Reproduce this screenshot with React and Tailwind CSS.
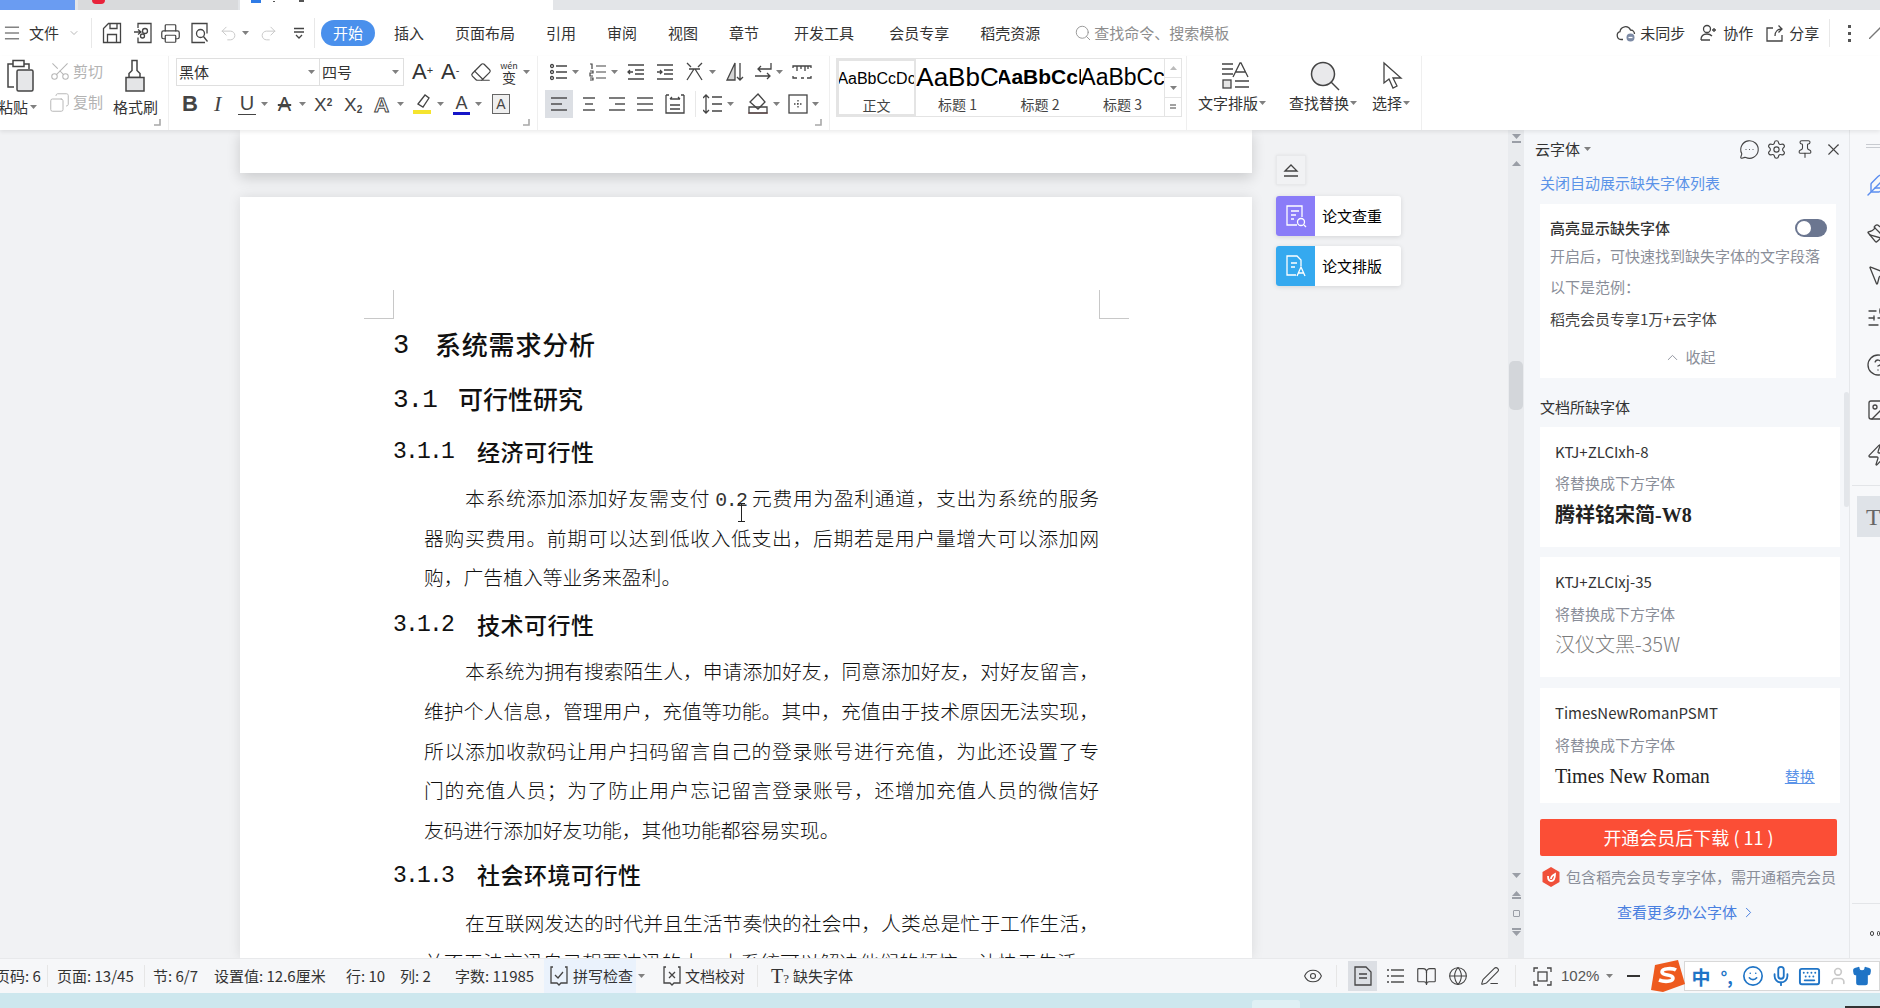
import React from 'react';
import { Menu, ChevronDown, ChevronUp, ChevronRight, Printer, Undo2, Redo2, Search, Scissors, MessageCircleMore, Settings, Pin, X, Eye, Globe, PenLine, Mic, Shirt, Smile, Keyboard, Copy, BookOpen, Eraser, Paintbrush, MousePointer2, SlidersHorizontal, CircleHelp, Zap, Image, Feather, User } from 'lucide-react';

const C = '\uFF0C';
const SEMI = '\uFF1B';
const COLON = '\uFF1A';
const STOP = '\u3002';
const J = '\u2060';

const P1A = `本系统添加添加好友需支付`;
const P1B = `元费用为盈利通道${C}支出为系统的服务器购买费用${STOP}前期可以达到低收入低支出${C}后期若是用户量增大可以添加网购${C}广告植入等业务来盈利${STOP}`;
const P2 = `本系统为拥有搜索陌生人${C}申请添加好友${C}同意添加好友${C}对好友留言${C}维护个人信息${C}管理用户${C}充值等功能${STOP}其中${C}充值由于技术原因无法实现${C}所以添加收款码让用户扫码留言自己的登录账号进行充值${C}为此还设置了专门${J}的充值人员${SEMI}为了防止用户忘记留言登录账号${C}还增加充值人员的微信好友${J}码进行添加好友功能${C}其他功能都容易实现${STOP}`;
const P3 = `在互联网发达的时代并且生活节奏快的社会中${C}人类总是忙于工作生活${C}并不无法交迅自己想要达迅的人${STOP}本系统可以解决他们的烦恼${C}让快于生活`;

const Caret = ({ cls = 'ml-[4px]' }) => (
  <svg width="7" height="4" viewBox="0 0 7 4" className={`shrink-0 ${cls}`}><path d="M0 0h7L3.5 4z" fill="#808080" /></svg>
);
const Lines = ({ rows, w = 18, h = 18, cls = '', sw = 1.4 }) => (
  <svg width={w} height={h} viewBox={`0 0 ${w} ${h}`} fill="none" stroke="#444" strokeWidth={sw} className={`shrink-0 ${cls}`}>
    {rows.map((r, i) => <path key={i} d={`M${r[0]} ${r[2]}H${r[1]}`} />)}
  </svg>
);
const Svg = ({ w, h, cls = '', sw = 1.3, color = '#444', children }) => (
  <svg width={w} height={h} viewBox={`0 0 ${w} ${h}`} fill="none" stroke={color} strokeWidth={sw} className={`shrink-0 ${cls}`}>{children}</svg>
);
const Launcher = ({ cls }) => (
  <svg width="7" height="7" viewBox="0 0 7 7" className={`absolute bottom-[4px] ${cls}`}><path d="M6 0v6H0" fill="none" stroke="#a8a8a8" strokeWidth="1.6" /></svg>
);

function TabStrip() {
  return (
    <div className="h-[10px] flex bg-[#e3e5e8] overflow-hidden">
      <div className="w-[75px] bg-[#6a9cf2]" />
      <div className="w-[160px] ml-[3px] bg-[#d9dadc] pl-[14px]"><div className="w-[13px] h-[4px] bg-[#e8223a] rounded-b-sm" /></div>
      <div className="w-[313px] ml-[2px] bg-white pl-[11px] flex gap-[12px]">
        <div className="w-[10px] h-[3px] bg-[#2f7be6]" />
        <div className="w-[2px] h-[1px] mt-[1px] bg-[#555]" />
        <div className="w-[5px] h-[2px] ml-[12px] bg-[#555]" />
      </div>
    </div>
  );
}

function MenuRow() {
  const tab = 'shrink-0 text-[15px] text-[#333]';
  return (
    <div className="h-[46px] bg-white flex items-center overflow-hidden">
      <Menu size={20} strokeWidth={1.2} color="#444" className="ml-[2px] shrink-0" />
      <span className={`${tab} ml-[7px]`}>文件</span>
      <ChevronDown size={12} strokeWidth={1.4} color="#999" className="ml-[9px] shrink-0" />
      <div className="w-px h-[30px] bg-[#e8e8e8] ml-[11px] shrink-0" />
      <Svg w={20} h={22} cls="ml-[10px]"><path d="M1.5 20.5v-14l5-5h12v19zM5.5 20.5v-8h9v8M8 1.5v5h7v-5" /></Svg>
      <Svg w={20} h={22} cls="ml-[11px]"><path d="M5 6V1.5h13v19H5v-5M1 10h6M5 7.5 8 10l-3 2.500" /><circle cx="12" cy="9" r="2.500" /><circle cx="9.500" cy="14" r="2" /></Svg>
      <Printer size={21} strokeWidth={1.4} color="#444" className="ml-[7px] shrink-0" />
      <Svg w={20} h={22} cls="ml-[9px]"><path d="M15 20.500H2v-19h15v10" /><circle cx="10.500" cy="11.500" r="4" /><path d="m13.500 14.500 4 5" /></Svg>
      <Undo2 size={19} strokeWidth={1.2} color="#c6c6c6" className="ml-[9px] shrink-0" />
      <Caret cls="ml-[4px]" />
      <Redo2 size={19} strokeWidth={1.2} color="#c6c6c6" className="ml-[10px] shrink-0" />
      <Svg w={12} h={12} cls="ml-[15px]"><path d="M1 1.500h10M1 5h10M3 8l3 3 3-3" /></Svg>
      <div className="w-px h-[30px] bg-[#e8e8e8] ml-[9px] shrink-0" />
      <div className="ml-[6px] w-[54px] h-[26px] rounded-full bg-[#4a90ec] text-white text-[15px] flex items-center justify-center shrink-0">开始</div>
      <span className={`${tab} ml-[19px]`}>插入</span>
      <span className={`${tab} ml-[31px]`}>页面布局</span>
      <span className={`${tab} ml-[31px]`}>引用</span>
      <span className={`${tab} ml-[31px]`}>审阅</span>
      <span className={`${tab} ml-[31px]`}>视图</span>
      <span className={`${tab} ml-[31px]`}>章节</span>
      <span className={`${tab} ml-[35px]`}>开发工具</span>
      <span className={`${tab} ml-[35px]`}>会员专享</span>
      <span className={`${tab} ml-[31px]`}>稻壳资源</span>
      <Search size={18} strokeWidth={1.3} color="#999" className="ml-[34px] shrink-0" />
      <span className="ml-[2px] text-[15px] text-[#8d8d8d] shrink-0">查找命令、搜索模板</span>
      <div className="ml-[387px] flex items-center shrink-0">
        <Svg w={20} h={18}><path d="M7 15.500H5a4 4 0 0 1-1-7.800A5.500 5.500 0 0 1 14.500 6a4 4 0 0 1 4 4" /><circle cx="14.500" cy="13.500" r="4" fill="#7c8aa5" stroke="none" /><path d="M12.500 13.500h4" stroke="#fff" /></Svg>
        <span className="ml-[4px] text-[15px]">未同步</span>
        <Svg w={16} h={18} cls="ml-[15px]"><circle cx="7" cy="5" r="3.500" /><path d="M1 16c0-5 3-6 6-6s4 1 5 2M1 16h9M12 6h4M14 4v4" /></Svg>
        <span className="ml-[7px] text-[15px]">协作</span>
        <Svg w={18} h={18} cls="ml-[13px]"><path d="M7 4H1v13h15v-6M9 12c0-5 3-7 7-7M12.500 1.500 16 5l-3.500 3.500" /></Svg>
        <span className="ml-[5px] text-[15px]">分享</span>
        <div className="w-px h-[28px] bg-[#e8e8e8] ml-[10px]" />
        <div className="ml-[18px] w-[3px] flex flex-col gap-[4px]"><i className="w-[3px] h-[3px] bg-[#555]" /><i className="w-[3px] h-[3px] bg-[#555]" /><i className="w-[3px] h-[3px] bg-[#555]" /></div>
        <Svg w={12} h={12} cls="ml-[18px]" color="#777"><path d="M0 12 12 0" /></Svg>
      </div>
    </div>
  );
}

function Clipboard() {
  return (
    <div className="w-[169px] shrink-0 border-r border-[#efefef] relative flex">
      <div className="w-[44px] shrink-0 flex flex-col">
        <Svg w={28} h={34} cls="ml-[6px] mt-[3px]" sw={1.5}><path d="M8 28H2V5h5M18 5h5v5" /><rect x="7" y="1.500" width="11" height="6" fill="#fff" /><rect x="11" y="11" width="16" height="21" rx="1.500" fill="#e6e7e9" /></Svg>
        <div className="flex items-center mt-[4px] -ml-[2px] text-[15px] leading-[20px]">粘贴<Caret cls="ml-[2px]" /></div>
      </div>
      <div className="w-[62px] shrink-0 ml-[5px] flex flex-col text-[#b3b3b3]">
        <div className="flex items-center h-[24px] mt-[3px]"><Scissors size={22} strokeWidth={1.1} color="#b5b5b5" className="-scale-x-100 rotate-90" /><span className="ml-[2px] text-[15px]">剪切</span></div>
        <div className="flex items-center h-[24px] mt-[7px]"><Copy size={21} strokeWidth={1.1} color="#b5b5b5" className="-scale-x-100" /><span className="ml-[3px] text-[15px]">复制</span></div>
      </div>
      <div className="w-[48px] shrink-0 ml-[2px] flex flex-col">
        <Svg w={26} h={34} cls="ml-[9px] mt-[3px]" sw={1.5}><path d="M10 1.500h5v10l3 3v4H7v-4l3-3z" /><path d="M4 18.500h18V32H4z" fill="#e4e5e7" stroke="#444" /></Svg>
        <div className="mt-[4px] text-[15px] leading-[20px] whitespace-nowrap">格式刷</div>
      </div>
      <Launcher cls="right-[7px]" />
    </div>
  );
}

function FontGroup() {
  return (
    <div className="w-[369px] shrink-0 border-r border-[#efefef] relative flex flex-col">
      <div className="h-[30px] mt-[1px] flex items-center">
        <div className="ml-[7px] w-[228px] h-[28px] border border-[#dfdfdf] flex text-[15px] shrink-0">
          <div className="w-[143px] flex items-center pl-[2px] pr-[4px] border-r border-[#dfdfdf]"><span className="flex-1">黑体</span><Caret /></div>
          <div className="flex-1 flex items-center pl-[2px] pr-[4px]"><span className="flex-1">四号</span><Caret /></div>
        </div>
        <span className="ml-[8px] w-[20px] text-[22px] leading-none font-['Liberation_Sans'] font-light">A<sup className="text-[11px]">+</sup></span>
        <span className="ml-[9px] w-[19px] text-[22px] leading-none font-['Liberation_Sans']">A<sup className="text-[11px]">-</sup></span>
        <Eraser size={22} strokeWidth={1.3} color="#444" className="ml-[10px] shrink-0" />
        <div className="ml-[8px] w-[18px] flex flex-col items-center leading-none"><span className="text-[9px] leading-[9px]">wén</span><span className="text-[14px] leading-[14px]">变</span></div>
        <Caret cls="ml-[5px]" />
      </div>
      <div className="h-[30px] mt-[2px] flex items-center font-['Liberation_Sans'] text-[#444] leading-none">
        <span className="ml-[13px] w-[16px] text-[22px] font-bold">B</span>
        <span className="ml-[16px] w-[10px] text-[22px] italic font-['Liberation_Serif']">I</span>
        <span className="ml-[14px] w-[18px] text-[20px] border-b-[1.5px] border-[#444] pb-[1px] text-center">U</span>
        <Caret cls="ml-[5px]" />
        <span className="ml-[7px] w-[19px] text-[20px] text-center line-through font-light">A</span>
        <Caret cls="ml-[5px]" />
        <span className="ml-[8px] w-[21px] text-[19px]">X<sup className="text-[10px] font-bold">2</sup></span>
        <span className="ml-[9px] w-[21px] text-[19px]">X<sub className="text-[10px] font-bold">2</sub></span>
        <span className="ml-[9px] w-[18px] text-[21px] font-bold text-white [-webkit-text-stroke:1px_#444]">A</span>
        <Caret cls="ml-[5px]" />
        <Svg w={20} h={22} cls="ml-[8px]"><path d="m6 11 7-9 4 3-6 9z" /><rect x="1" y="17" width="18" height="4" fill="#f5e42e" stroke="none" /></Svg>
        <Caret cls="ml-[5px]" />
        <div className="ml-[9px] w-[17px] flex flex-col items-center"><span className="text-[18px] leading-[18px]">A</span><i className="w-[17px] h-[3px] bg-[#1515c8]" /></div>
        <Caret cls="ml-[5px]" />
        <span className="ml-[10px] w-[18px] h-[20px] border border-[#666] bg-[#efefef] text-[14px] flex items-center justify-center">A</span>
      </div>
      <Launcher cls="right-[7px]" />
    </div>
  );
}

function ParaGroup() {
  const l = [[3, 15, 3], [5, 13, 9], [3, 15, 15]];
  return (
    <div className="w-[292px] shrink-0 border-r border-[#efefef] relative flex flex-col">
      <div className="h-[30px] mt-[1px] flex items-center">
        <Svg w={18} h={18} cls="ml-[12px]"><circle cx="2" cy="3" r="1.500" /><circle cx="2" cy="9" r="1.500" /><circle cx="2" cy="15" r="1.500" /><path d="M6 3h11M6 9h11M6 15h11" /></Svg>
        <Caret />
        <Svg w={18} h={18} cls="ml-[10px]" sw={1.2}><path d="M1 1h2v5M1 8h3v2H1v3h3M1 15h3v2H1M7 3h10M7 9h10M7 15h10" /></Svg>
        <Caret />
        <Svg w={18} h={18} cls="ml-[9px]"><path d="M1 2h16M8 7h9M8 11h9M1 16h16M6 9H1M3 7 1 9l2 2" /></Svg>
        <Svg w={18} h={18} cls="ml-[11px]"><path d="M1 2h16M8 7h9M8 11h9M1 16h16M1 9h5M4 7l2 2-2 2" /></Svg>
        <Svg w={21} h={20} cls="ml-[10px]"><path d="M3 1l4 4M18 1l-4 4M5 7h11M10 7 3 18M11 7l7 11" /></Svg>
        <Caret />
        <Svg w={20} h={20} cls="ml-[8px]"><path d="M11 1 3 18h8z" fill="#d5d5d5" /><path d="M16 1v17M13 15l3 3 3-3" /></Svg>
        <Svg w={18} h={20} cls="ml-[10px]"><path d="M17 1v6H4M7 4 4 7l3 3M1 14h15M13 11l3 3-3 3" /></Svg>
        <Caret />
        <Svg w={20} h={14} cls="ml-[9px]"><path d="M1 3V1h18v2M1 11v2h4M19 11v2h-4M5 1v5M9 1v3M13 1v5M16 1v3M9 13h3" /></Svg>
      </div>
      <div className="h-[30px] mt-[2px] flex items-center">
        <div className="ml-[7px] w-[28px] h-[28px] bg-[#dcdfe4] flex items-center justify-center"><Lines rows={[[1, 17, 3], [1, 12, 9], [1, 17, 15]]} /></div>
        <Lines cls="ml-[7px]" rows={l} />
        <Lines cls="ml-[10px]" rows={[[1, 17, 3], [7, 17, 9], [1, 17, 15]]} />
        <Lines cls="ml-[10px]" rows={[[1, 17, 3], [1, 17, 9], [1, 17, 15]]} />
        <Svg w={20} h={20} cls="ml-[11px]"><path d="M1 1v18h18V1M1 1h3M19 1h-3M5 5h10M5 5l2-2M15 5l-2-2M5 11h10M5 15h10" /></Svg>
        <div className="w-px h-[26px] bg-[#e8e8e8] ml-[10px]" />
        <Svg w={20} h={22} cls="ml-[7px]"><path d="M3 2v18M0 5l3-3 3 3M0 17l3 3 3-3M9 4h10M9 11h10M9 18h10" /></Svg>
        <Caret />
        <Svg w={22} h={22} cls="ml-[13px]"><path d="m3 9 8-8 7 8-7 7z" /><path d="M1 20h20" stroke="#d88080" /><path d="M2 14h18v6H2z" /></Svg>
        <Caret />
        <Svg w={20} h={20} cls="ml-[8px]"><rect x="1" y="1" width="18" height="18" /><path d="M10 6v8M6 10h8" strokeDasharray="1.500 1.500" /></Svg>
        <Caret />
      </div>
      <Launcher cls="right-[7px]" />
    </div>
  );
}

function Styles() {
  const cells = [
    ['AaBbCcDc', '正文', 'text-[16px]', 'w-[79px] border-2 border-[#e4e4e4] bg-white'],
    ['AaBbC', '标题 1', 'text-[26px]', 'w-[83px]'],
    ['AaBbCcl', '标题 2', 'text-[21px] font-bold', 'w-[82px]'],
    ['AaBbCc', '标题 3', 'text-[23px]', 'w-[83px]'],
  ];
  return (
    <div className="w-[357px] shrink-0 border-r border-[#efefef] flex">
      <div className="ml-[6px] mt-[2px] w-[346px] h-[59px] border border-[#e4e4e4] flex">
        {cells.map((c) => (
          <div key={c[1]} className={`${c[3]} shrink-0 h-full flex flex-col items-center overflow-hidden`}>
            <div className="h-[36px] w-full flex items-center justify-center whitespace-nowrap font-['Liberation_Sans'] text-black overflow-hidden">
              <span className={c[2]}>{c[0]}</span>
            </div>
            <div className="text-[14px] leading-[18px] text-[#444]">{c[1]}</div>
          </div>
        ))}
        <div className="flex-1 border-l border-[#e4e4e4] flex flex-col text-[#999]">
          <div className="h-[19px] flex items-center justify-center border-b border-[#e4e4e4]"><svg width="7" height="4" viewBox="0 0 7 4"><path d="M3.500 0 7 4H0z" fill="#bbb" /></svg></div>
          <div className="h-[20px] flex items-center justify-center border-b border-[#e4e4e4]"><Caret cls="" /></div>
          <div className="flex-1 flex items-center justify-center"><Lines w={8} h={8} sw={1} rows={[[1, 7, 2], [1, 7, 5]]} /></div>
        </div>
      </div>
    </div>
  );
}

function Tools() {
  return (
    <div className="w-[235px] shrink-0 border-r border-[#efefef] flex">
      <div className="w-[70px] ml-[12px] shrink-0 flex flex-col items-center">
        <Svg w={30} h={30} cls="mt-[5px] ml-[4px]"><path d="M1 3h11M1 8h11M1 13h11M12 16 19 2h1l7 14M15 11h10" /><rect x="2" y="19" width="8" height="8" fill="#e5e5e5" /><path d="M14 20h14M14 26h14" /></Svg>
        <div className="flex items-center mt-[2px] -ml-[4px] text-[15px] leading-[20px] whitespace-nowrap">文字排版<Caret cls="ml-[1px]" /></div>
      </div>
      <div className="w-[66px] ml-[21px] shrink-0 flex flex-col items-center">
        <Svg w={30} h={30} cls="mt-[5px] ml-[4px]" sw={1.5}><circle cx="13" cy="13" r="11.500" fill="#e9e9eb" /><path d="m21 21 8 8" /></Svg>
        <div className="flex items-center mt-[2px] text-[15px] leading-[20px] whitespace-nowrap">查找替换<Caret cls="ml-[1px]" /></div>
      </div>
      <div className="w-[40px] ml-[15px] shrink-0 flex flex-col items-center">
        <Svg w={22} h={30} cls="mt-[5px] ml-[4px]"><path d="M2 2v20l5-4 4 9 4-2-4-8h8z" /></Svg>
        <div className="flex items-center mt-[2px] text-[15px] leading-[20px] whitespace-nowrap">选择<Caret cls="ml-[1px]" /></div>
      </div>
    </div>
  );
}

function Ribbon() {
  return (
    <div className="h-[74px] bg-white flex relative z-10 shadow-[0_2px_4px_rgba(0,0,0,0.08)]">
      <Clipboard />
      <FontGroup />
      <ParaGroup />
      <Styles />
      <Tools />
    </div>
  );
}

const H = ({ n, t, cls, mono, mt }) => (
  <div className={`${cls} ${mt} h-[40px] flex items-center font-medium text-[#111] whitespace-nowrap`}>
    <span className={`font-['Liberation_Mono'] font-normal shrink-0 leading-none ${mono}`}>{n}</span>
    <span>{t}</span>
  </div>
);
const P = ({ children, mt }) => (
  <p className={`${mt} pl-[31px] indent-[41px] text-justify text-[19.8px] leading-[39.7px] font-light text-[#111]`}>{children}</p>
);

function Page() {
  return (
    <div className="w-[1012px] shrink-0 flex flex-col">
      <div className="h-[43px] bg-white shrink-0 shadow-[0_5px_14px_rgba(0,0,0,0.16)]" />
      <div className="mt-[24px] bg-white flex-1 shadow-[0_0_12px_rgba(0,0,0,0.10)] relative overflow-hidden">
        <div className="mt-[93px] pl-[124px] pr-[123px] flex justify-between">
          <div className="w-[30px] h-[29px] border-r border-b border-[#c8c8c8]" />
          <div className="w-[30px] h-[29px] border-l border-b border-[#c8c8c8]" />
        </div>
        <div className="pl-[153px] pr-[153px]">
          <H n="3" t="系统需求分析" mt="mt-[4px]" cls="text-[26px] tracking-[0.8px]" mono="text-[27px] w-[42px] pt-[6px]" />
          <H n="3.1" t="可行性研究" mt="mt-[16px]" cls="text-[25px]" mono="text-[26px] tracking-[-1px] w-[65px] pt-[2px]" />
          <H n="3.1.1" t="经济可行性" mt="mt-[12px]" cls="text-[23px] tracking-[0.5px]" mono="text-[23px] tracking-[-1.8px] w-[84px] pt-[3px]" />
          <P mt="mt-[7px]">{P1A}<span className="font-['Liberation_Mono'] mx-[5px] tracking-[-1.5px] leading-none text-[#333]">0.2</span>{P1B}</P>
          <H n="3.1.2" t="技术可行性" mt="mt-[7px]" cls="text-[23px] tracking-[0.5px]" mono="text-[23px] tracking-[-1.8px] w-[84px] pt-[3px]" />
          <P mt="mt-[7px]">{P2}</P>
          <H n="3.1.3" t="社会环境可行性" mt="mt-[5px]" cls="text-[23px] tracking-[0.5px]" mono="text-[23px] tracking-[-1.8px] w-[84px] pt-[3px]" />
          <P mt="mt-[8px]">{P3}</P>
        </div>
        <svg width="9" height="19" viewBox="0 0 9 19" className="absolute left-[497px] top-[306px]"><path d="M1 .5h7M4.500.5v18M1 18.500h7" stroke="#222" fill="none" /></svg>
      </div>
    </div>
  );
}

function SideBtns() {
  const Card = ({ bg, t, mt, children }) => (
    <div className={`${mt} h-[40px] w-[125px] bg-white rounded-[3px] flex items-center overflow-hidden shadow-[0_1px_5px_rgba(0,0,0,0.12)]`}>
      <div className={`${bg} w-[39px] h-full flex items-center justify-center`}>{children}</div>
      <span className="ml-[7px] text-[15px] text-black">{t}</span>
    </div>
  );
  return (
    <div className="ml-[24px] w-[125px] shrink-0 pt-[25px]">
      <div className="w-[30px] h-[30px] bg-[#f1f2f4] border border-[#e8e9eb] flex items-center justify-center shadow-[0_0_3px_rgba(0,0,0,0.08)]">
        <Svg w={16} h={13}><path d="M2 7 8 1l6 6zM1 12h14" /></Svg>
      </div>
      <Card bg="bg-[#8a7cf8]" t="论文查重" mt="mt-[11px]">
        <Svg w={22} h={24} color="#fff"><path d="M12 21H2V2h15v11M6 7h8M6 11h5M6 15h3" /><circle cx="16" cy="18" r="3.500" /><path d="m19 21 2 2" /></Svg>
      </Card>
      <Card bg="bg-[#35a9ef]" t="论文排版" mt="mt-[10px]">
        <Svg w={22} h={24} color="#fff"><path d="M11 21H2V2h10l4 4v6M6 9h6M6 13h4" /><path d="m12 22 4-9 4 9M13.500 19h5" /></Svg>
      </Card>
    </div>
  );
}

function Scroll() {
  const tri = <svg width="9" height="5" viewBox="0 0 9 5"><path d="M4.500 0 9 5H0z" fill="#9a9ea6" /></svg>;
  const dn = <svg width="9" height="5" viewBox="0 0 9 5"><path d="M0 0h9L4.500 5z" fill="#9a9ea6" /></svg>;
  return (
    <div className="w-[16px] ml-[107px] shrink-0 bg-[#e9ebee] flex flex-col items-center">
      <div className="h-[19px] mt-[4px] flex flex-col items-center gap-[2px]">{dn}<i className="w-[9px] h-[2px] bg-[#9a9ea6]" /></div>
      <div className="mt-[8px]">{tri}</div>
      <div className="mt-[195px] w-[14px] h-[49px] bg-[#d3d6da] rounded-[5px]" />
      <div className="mt-[463px]">{dn}</div>
      <div className="mt-[13px] flex flex-col items-center gap-[1px]">{tri}<i className="w-[9px] h-[2px] bg-[#9a9ea6]" /></div>
      <div className="mt-[11px] w-[7px] h-[7px] border border-[#9a9ea6] rounded-[1px]" />
      <div className="mt-[11px] flex flex-col items-center gap-[1px]"><i className="w-[9px] h-[2px] bg-[#9a9ea6]" />{dn}</div>
    </div>
  );
}

function FontCard({ name, sub = '将替换成下方字体', mt, h, gap1, gap2, children }) {
  return (
    <div className={`${mt} ${h} w-[300px] bg-white pl-[15px] shrink-0 flex flex-col`}>
      <div className="mt-[15px] h-[20px] text-[15px] leading-[20px] text-[#333]">{name}</div>
      <div className={`${gap1} h-[20px] text-[15px] leading-[20px] text-[#8a8e99]`}>{sub}</div>
      <div className={`${gap2} h-[28px] flex items-center`}>{children}</div>
    </div>
  );
}

function Panel() {
  return (
    <div className="w-[326px] shrink-0 bg-[#f5f7fa] pl-[16px] relative overflow-hidden border-r border-[#e6e8eb] flex flex-col">
      <div className="h-[38px] -ml-[5px] flex items-center whitespace-nowrap shrink-0">
        <span className="text-[15px]">云字体</span><Caret cls="ml-[4px]" />
        <MessageCircleMore size={21} strokeWidth={1.3} color="#444" className="ml-[148px]" />
        <Settings size={21} strokeWidth={1.3} color="#444" className="ml-[6px]" />
        <Pin size={20} strokeWidth={1.3} color="#444" className="ml-[8px]" />
        <X size={19} strokeWidth={1.4} color="#444" className="ml-[9px]" />
      </div>
      <div className="mt-[5px] h-[20px] text-[15px] leading-[20px] text-[#5b93e8]">关闭自动展示缺失字体列表</div>
      <div className="mt-[11px] w-[296px] h-[174px] bg-white pl-[10px] flex flex-col text-[15px] leading-[20px] shrink-0">
        <div className="mt-[14px] h-[20px] flex items-center">
          <span className="font-medium text-[#333]">高亮显示缺失字体</span>
          <div className="ml-[125px] w-[32px] h-[18px] rounded-full bg-[#6b7690] p-[2px]"><div className="w-[14px] h-[14px] rounded-full bg-white" /></div>
        </div>
        <div className="mt-[8px] h-[20px] whitespace-nowrap text-[#8a8e99]">{`开启后${C}可快速找到缺失字体的文字段落`}</div>
        <div className="mt-[11px] h-[20px] text-[#8a8e99]">{`以下是范例${COLON}`}</div>
        <div className="mt-[12px] h-[20px] text-[#444]">稻壳会员专享1万+云字体</div>
        <div className="mt-[18px] h-[20px] flex items-center justify-center pr-[6px] text-[#8a8e99]"><ChevronUp size={17} strokeWidth={1.3} /><span className="ml-[4px]">收起</span></div>
      </div>
      <div className="mt-[19px] h-[20px] text-[15px] leading-[20px]">文档所缺字体</div>
      <FontCard name="KTJ+ZLCIxh-8" mt="mt-[10px]" h="h-[120px]" gap1="mt-[11px]" gap2="mt-[7px]">
        <span className="text-[20px] font-bold text-[#222]">腾祥铭宋简<span className="font-['Liberation_Serif']">-W8</span></span>
      </FontCard>
      <FontCard name="KTJ+ZLCIxj-35" mt="mt-[10px]" h="h-[120px]" gap1="mt-[12px]" gap2="mt-[6px]">
        <span className="text-[20px] font-light text-[#7c7c7c]">汉仪文黑-35W</span>
      </FontCard>
      <FontCard name="TimesNewRomanPSMT" mt="mt-[11px]" h="h-[115px]" gap1="mt-[12px]" gap2="mt-[7px]">
        <span className="font-['Liberation_Serif'] text-[20px] text-[#222]">Times New Roman</span>
        <span className="ml-[75px] text-[15px] text-[#5b93e8] underline">替换</span>
      </FontCard>
      <div className="mt-[16px] w-[297px] h-[37px] shrink-0 bg-[#fb4e36] rounded-[2px] text-white text-[18px] flex items-center justify-center">开通会员后下载 ( 11 )</div>
      <div className="mt-[11px] h-[20px] flex items-center text-[15px] leading-[20px] text-[#8a8e99] whitespace-nowrap">
        <svg width="18" height="20" viewBox="0 0 18 20" className="ml-[2px] shrink-0"><path d="M9 0l8.500 5v10L9 20 .5 15V5z" fill="#f0503a" /><path d="M6 9c0 4 2 5 3 5 3 0 4-3 4-7-2 1-4 3-4 5" stroke="#fff" strokeWidth="1.800" fill="none" /></svg>
        <span className="ml-[6px]">{`包含稻壳会员专享字体${C}需开通稻壳会员`}</span>
      </div>
      <div className="mt-[15px] h-[20px] ml-[77px] flex items-center text-[15px] text-[#4a80e0]">查看更多办公字体<ChevronRight size={17} strokeWidth={1.4} className="ml-[3px]" /></div>
      <div className="absolute left-[320px] top-[262px] w-[5px] h-[115px] bg-[#e3e6ea] rounded-full" />
    </div>
  );
}

function Rail() {
  const c = 'ml-[16px] shrink-0';
  return (
    <div className="flex-1 bg-[#f7f8fa] overflow-hidden flex flex-col">
      <div className="ml-[16px] mt-[14px] h-[4px] border-y border-[#c8cbd0]" />
      <Feather size={24} strokeWidth={1.4} color="#5b8def" className={`${c} mt-[25px]`} />
      <Paintbrush size={24} strokeWidth={1.3} color="#444" className={`${c} mt-[23px]`} />
      <MousePointer2 size={24} strokeWidth={1.3} color="#444" className={`${c} mt-[19px]`} />
      <SlidersHorizontal size={24} strokeWidth={1.3} color="#444" className={`${c} mt-[19px]`} />
      <CircleHelp size={24} strokeWidth={1.3} color="#444" className={`${c} mt-[23px]`} />
      <Image size={24} strokeWidth={1.3} color="#444" className={`${c} mt-[21px]`} />
      <Zap size={24} strokeWidth={1.3} color="#444" className={`${c} mt-[21px]`} />
      <div className="mt-[18px] ml-[2px] h-px bg-[#e3e5e8]" />
      <div className="mt-[10px] ml-[7px] h-[41px] bg-[#dfe3e8] pl-[9px] flex items-center font-['Liberation_Serif'] text-[24px] text-[#666]">T</div>
      <div className="mt-[366px] ml-[2px] h-px bg-[#e3e5e8]" />
      <div className="mt-[27px] ml-[20px] flex gap-[3px]"><i className="w-[5px] h-[5px] rounded-full border border-[#444]" /><i className="w-[5px] h-[5px] rounded-full border border-[#444]" /></div>
    </div>
  );
}

function StatusBar() {
  const it = 'shrink-0 whitespace-nowrap';
  const D = ({ cls }) => <div className={`w-px h-[22px] bg-[#e6e6e6] shrink-0 ${cls}`} />;
  return (
    <div className="h-[35px] bg-[#f6f7f9] border-t border-[#e8e9eb] flex items-center text-[15px] text-[#333] relative z-10 overflow-hidden">
      <span className={`${it} -ml-[5px] w-[47px]`}>页码: 6</span>
      <D cls="mr-[9px] ml-[5px]" />
      <span className={`${it} w-[81px]`}>页面: 13/45</span>
      <D cls="mr-[8px] ml-[6px]" />
      <span className={`${it} w-[61px]`}>节: 6/7</span>
      <span className={`${it} w-[132px]`}>设置值: 12.6厘米</span>
      <span className={`${it} w-[54px]`}>行: 10</span>
      <span className={`${it} w-[55px]`}>列: 2</span>
      <span className={`${it} w-[89px]`}>字数: 11985</span>
      <div className="h-[35px] w-[92px] shrink-0 bg-[#eaf2fc] flex items-center pl-[6px]">
        <Svg w={18} h={20}><path d="M3 1H1v16h6l2 2 2-2h6V1h-2" /><path d="m5 9 3 3 5-6" /></Svg>
        <span className="ml-[5px]">拼写检查</span>
      </div>
      <Caret cls="ml-[2px]" />
      <Svg w={18} h={20} cls="ml-[18px]"><path d="M3 1H1v16h6l2 2 2-2h6V1h-2" /><path d="m6 6 6 6M12 6l-6 6" /></Svg>
      <span className="ml-[4px]">文档校对</span>
      <D cls="ml-[12px]" />
      <span className="ml-[13px] w-[22px] shrink-0 font-['Liberation_Serif'] text-[20px] leading-none">T<span className="text-[13px]">?</span></span>
      <span className="shrink-0">缺失字体</span>
      <Eye size={20} strokeWidth={1.3} color="#444" className="ml-[450px] shrink-0" />
      <D cls="ml-[13px]" />
      <div className="ml-[11px] w-[29px] h-[30px] bg-[#dcdfe4] flex items-center justify-center shrink-0">
        <Svg w={18} h={20}><path d="M1 1h11l5 5v13H1zM5 8h8M5 12h8" /></Svg>
      </div>
      <Lines cls="ml-[9px]" rows={[[1, 3, 3], [5, 18, 3], [1, 3, 9], [5, 18, 9], [1, 3, 15], [5, 18, 15]]} />
      <BookOpen size={21} strokeWidth={1.3} color="#444" className="ml-[12px] shrink-0" />
      <Globe size={20} strokeWidth={1.3} color="#444" className="ml-[11px] shrink-0" />
      <PenLine size={20} strokeWidth={1.3} color="#444" className="ml-[12px] shrink-0" />
      <D cls="ml-[15px]" />
      <Svg w={19} h={19} cls="ml-[17px]"><path d="M1 5V1h4M14 1h4v4M18 14v4h-4M5 18H1v-4" /><rect x="5" y="5" width="9" height="9" /></Svg>
      <span className="ml-[9px] text-[#555] font-['Liberation_Sans'] shrink-0">102%</span>
      <Caret cls="ml-[7px]" />
      <div className="ml-[14px] w-[13px] h-[2.5px] bg-[#333] shrink-0" />
      <div className="ml-[10px] shrink-0 w-[36px] h-[34px] flex items-center justify-center relative z-10">
        <svg width="36" height="34" viewBox="0 0 36 34"><path d="M5 6 28 1l7 24-22 8-12-2z" fill="#ee5a1e" /><path d="M26 11c-3-2-14-2-14 2 0 4 11 2 11 6 0 4-9 4-14 2" fill="none" stroke="#fff" strokeWidth="3.600" /></svg>
      </div>
      <div className="-ml-[2px] flex-1 h-[30px] bg-white border border-[#d8d8d8] flex items-center text-[#1f74c6] pl-[6px] overflow-hidden">
        <span className="text-[19px] font-bold leading-none shrink-0">中</span>
        <span className="ml-[10px] text-[17px] font-bold leading-none shrink-0">°,</span>
        <Smile size={22} strokeWidth={1.8} className="ml-[9px] shrink-0" />
        <Mic size={22} strokeWidth={2} className="ml-[6px] shrink-0" />
        <Keyboard size={23} strokeWidth={2} className="ml-[6px] shrink-0" />
        <User size={20} strokeWidth={2} color="#c9c9c9" className="ml-[7px] shrink-0" />
        <Shirt size={20} fill="#1f74c6" className="ml-[4px] shrink-0" />
      </div>
    </div>
  );
}

export default function App() {
  return (
    <div className="w-[1880px] h-[1008px] flex flex-col overflow-hidden bg-white text-[15px] text-[#333] font-['Noto_Sans_CJK_SC','Liberation_Sans',sans-serif]">
      <TabStrip />
      <MenuRow />
      <Ribbon />
      <div className="h-[828px] flex bg-[#f1f2f4] overflow-hidden pl-[240px] shrink-0">
        <Page />
        <SideBtns />
        <Scroll />
        <Panel />
        <Rail />
      </div>
      <StatusBar />
      <div className="h-[15px] bg-[#cde7ee] relative overflow-hidden flex">
        <div className="ml-[1252px] mt-[7px] w-[48px] h-[10px] rounded-t-[3px] bg-[#dff0f4]" />
        <div className="ml-[545px] mt-[13px] w-[35px] h-[2px] bg-[#333]" />
      </div>
    </div>
  );
}
